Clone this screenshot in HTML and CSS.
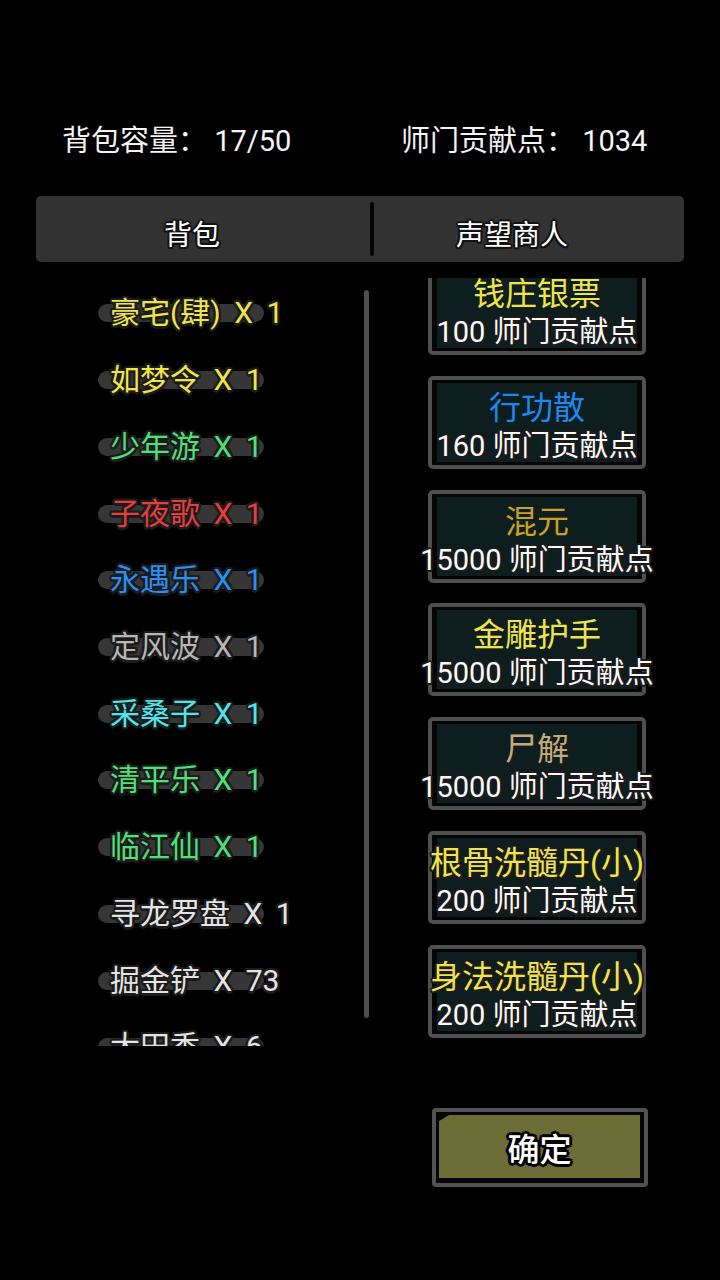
FILE: index.html
```html
<!DOCTYPE html>
<html lang="zh-CN">
<head>
<meta charset="utf-8">
<title>背包</title>
<link rel="stylesheet" href="styles.css">
</head>
<body>
<div class="screen">
  <div class="stats">
    <span class="stat">背包容量： 17/50</span>
    <span class="stat">师门贡献点： 1034</span>
  </div>

  <div class="tabs">
    <div class="tab tab-left">背包</div>
    <div class="tab-divider"></div>
    <div class="tab tab-right">声望商人</div>
  </div>

  <div class="main">
    <div class="bag">
      <div class="item"><div class="pill c-yellow">豪宅(肆) X 1</div></div>
      <div class="item"><div class="pill c-yellow">如梦令 X 1</div></div>
      <div class="item"><div class="pill c-green">少年游 X 1</div></div>
      <div class="item"><div class="pill c-red">子夜歌 X 1</div></div>
      <div class="item"><div class="pill c-blue">永遇乐 X 1</div></div>
      <div class="item"><div class="pill c-gray">定风波 X 1</div></div>
      <div class="item"><div class="pill c-cyan">采桑子 X 1</div></div>
      <div class="item"><div class="pill c-green">清平乐 X 1</div></div>
      <div class="item"><div class="pill c-green">临江仙 X 1</div></div>
      <div class="item"><div class="pill c-white">寻龙罗盘 X 1</div></div>
      <div class="item"><div class="pill c-white">掘金铲 X 73</div></div>
      <div class="item"><div class="pill c-white">大田香 X 6</div></div>
    </div>
    <div class="scrollbar"></div>
    <div class="shop">
      <div class="shop-list">
        <div class="good"><div class="good-inner"><div class="good-name c-yellow">钱庄银票</div><div class="good-cost">100 师门贡献点</div></div></div>
        <div class="good"><div class="good-inner"><div class="good-name c-sblue">行功散</div><div class="good-cost">160 师门贡献点</div></div></div>
        <div class="good"><div class="good-inner"><div class="good-name c-gold">混元</div><div class="good-cost">15000 师门贡献点</div></div></div>
        <div class="good"><div class="good-inner"><div class="good-name c-yellow">金雕护手</div><div class="good-cost">15000 师门贡献点</div></div></div>
        <div class="good"><div class="good-inner"><div class="good-name c-tan">尸解</div><div class="good-cost">15000 师门贡献点</div></div></div>
        <div class="good"><div class="good-inner"><div class="good-name c-yellow outlined">根骨洗髓丹(小)</div><div class="good-cost">200 师门贡献点</div></div></div>
        <div class="good"><div class="good-inner"><div class="good-name c-yellow outlined">身法洗髓丹(小)</div><div class="good-cost">200 师门贡献点</div></div></div>
      </div>
    </div>
  </div>

  <div class="actions">
    <div class="confirm">
      <div class="confirm-gap">
        <div class="confirm-face">确定</div>
      </div>
    </div>
  </div>
</div>
</body>
</html>
```

FILE: styles.css
```css
* { box-sizing: border-box; }

html, body {
  margin: 0;
  padding: 0;
  background: #000;
}

body {
  font-family: Roboto, "Noto Sans CJK SC", "Noto Sans", sans-serif;
  color: #fff;
}

.screen {
  width: 720px;
  height: 1280px;
  overflow: hidden;
  background: #000;
}

/* header stats */
.stats {
  display: grid;
  grid-template-columns: 339px auto;
  padding-top: 121px;
  padding-left: 62px;
  height: 161px;
}

.stat {
  font-size: 29px;
  line-height: 40px;
  height: 40px;
  color: #f4f4f4;
  white-space: nowrap;
}

/* tabs */
.tabs {
  margin: 35px 36px 0;
  height: 66px;
  background: #323232;
  border-radius: 5px;
  display: flex;
  align-items: center;
}

.tab {
  height: 66px;
  padding-top: 8px;
  display: flex;
  align-items: center;
  justify-content: center;
  font-size: 28px;
  color: #fff;
  text-shadow:
    -2px 0 #111, 2px 0 #111, 0 -2px #111, 0 2px #111,
    -1.5px -1.5px #111, 1.5px -1.5px #111, -1.5px 1.5px #111, 1.5px 1.5px #111;
}

.tab-left { width: 312px; }
.tab-right { width: 276px; }

.tab-divider {
  margin-left: 22px;
  width: 4px;
  height: 54px;
  border-radius: 2px;
  background: #050505;
}

/* main area */
.main {
  margin-top: 16px;
  height: 768px;
  display: flex;
  align-items: flex-start;
}

.bag {
  margin-left: 98px;
  width: 266px;
  height: 768px;
  padding-top: 2px;
  overflow-y: clip;
  overflow-x: visible;
}

.item {
  height: 66.73px;
  display: flex;
  align-items: center;
}

.pill {
  width: 166px;
  height: 18px;
  border-radius: 9px;
  background: #363636;
  padding-left: 12px;
  display: flex;
  align-items: center;
  white-space: nowrap;
  font-size: 30px;
  word-spacing: 6px;
  line-height: 18px;
  text-shadow:
    -2.5px 0 #1b1b1b, 2.5px 0 #1b1b1b, 0 -2.5px #1b1b1b, 0 2.5px #1b1b1b,
    -1.8px -1.8px #1b1b1b, 1.8px -1.8px #1b1b1b, -1.8px 1.8px #1b1b1b, 1.8px 1.8px #1b1b1b;
}

.scrollbar {
  margin-top: 12px;
  width: 5px;
  height: 728px;
  border-radius: 3px;
  background: #4e4e4e;
}

.shop {
  margin-left: 59px;
  width: 218px;
  height: 768px;
  overflow-y: clip;
  overflow-x: visible;
}

.shop-list {
  margin-top: -16px;
  display: flex;
  flex-direction: column;
  gap: 20.8px;
}

.good {
  width: 218px;
  height: 93px;
  border: 4px solid #4f4f4f;
  border-radius: 5px;
  background: #050505;
  padding: 3px 5px;
}

.good-inner {
  height: 79px;
  background: #0e1d1d;
  padding-top: 7px;
}

.good-name {
  height: 36px;
  line-height: 36px;
  font-size: 32px;
  display: flex;
  justify-content: center;
  white-space: nowrap;
}

.good-name.outlined {
  text-shadow:
    -2px 0 #1b1b1b, 2px 0 #1b1b1b, 0 -2px #1b1b1b, 0 2px #1b1b1b,
    -1.5px -1.5px #1b1b1b, 1.5px -1.5px #1b1b1b, -1.5px 1.5px #1b1b1b, 1.5px 1.5px #1b1b1b;
}

.good-cost {
  height: 40px;
  line-height: 40px;
  font-size: 29px;
  color: #fafafa;
  display: flex;
  justify-content: center;
  white-space: nowrap;
  text-shadow:
    -2px 0 #1b1b1b, 2px 0 #1b1b1b, 0 -2px #1b1b1b, 0 2px #1b1b1b,
    -1.5px -1.5px #1b1b1b, 1.5px -1.5px #1b1b1b, -1.5px 1.5px #1b1b1b, 1.5px 1.5px #1b1b1b;
}

/* colours */
.c-yellow { color: #f0e44c; }
.c-green  { color: #4fe07a; }
.c-red    { color: #e63e3e; }
.c-blue   { color: #2a8ef2; }
.c-gray   { color: #b6b6b6; }
.c-cyan   { color: #4ee6ea; }
.c-white  { color: #e4e4e4; }
.c-sblue  { color: #1f88f0; }
.c-gold   { color: #c9a126; }
.c-tan    { color: #c8aa7a; }

/* confirm button */
.actions {
  margin-top: 62px;
  display: flex;
  justify-content: flex-end;
  padding-right: 72px;
}

.confirm {
  width: 216px;
  height: 79px;
  border: 4px solid #525252;
  border-radius: 4px;
  background: #050505;
}

.confirm-gap {
  padding: 3px 4px 5px 3px;
  height: 100%;
}

.confirm-face {
  height: 100%;
  background: #6c6c37;
  clip-path: polygon(0 6px, 10px 0, 100% 0, 100% 100%, 0 100%);
  display: flex;
  align-items: center;
  justify-content: center;
  font-size: 32px;
  font-weight: 500;
  color: #fff;
  text-shadow:
    -3px 0 #000, 3px 0 #000, 0 -3px #000, 0 3px #000,
    -2.2px -2.2px #000, 2.2px -2.2px #000, -2.2px 2.2px #000, 2.2px 2.2px #000;
}
```
